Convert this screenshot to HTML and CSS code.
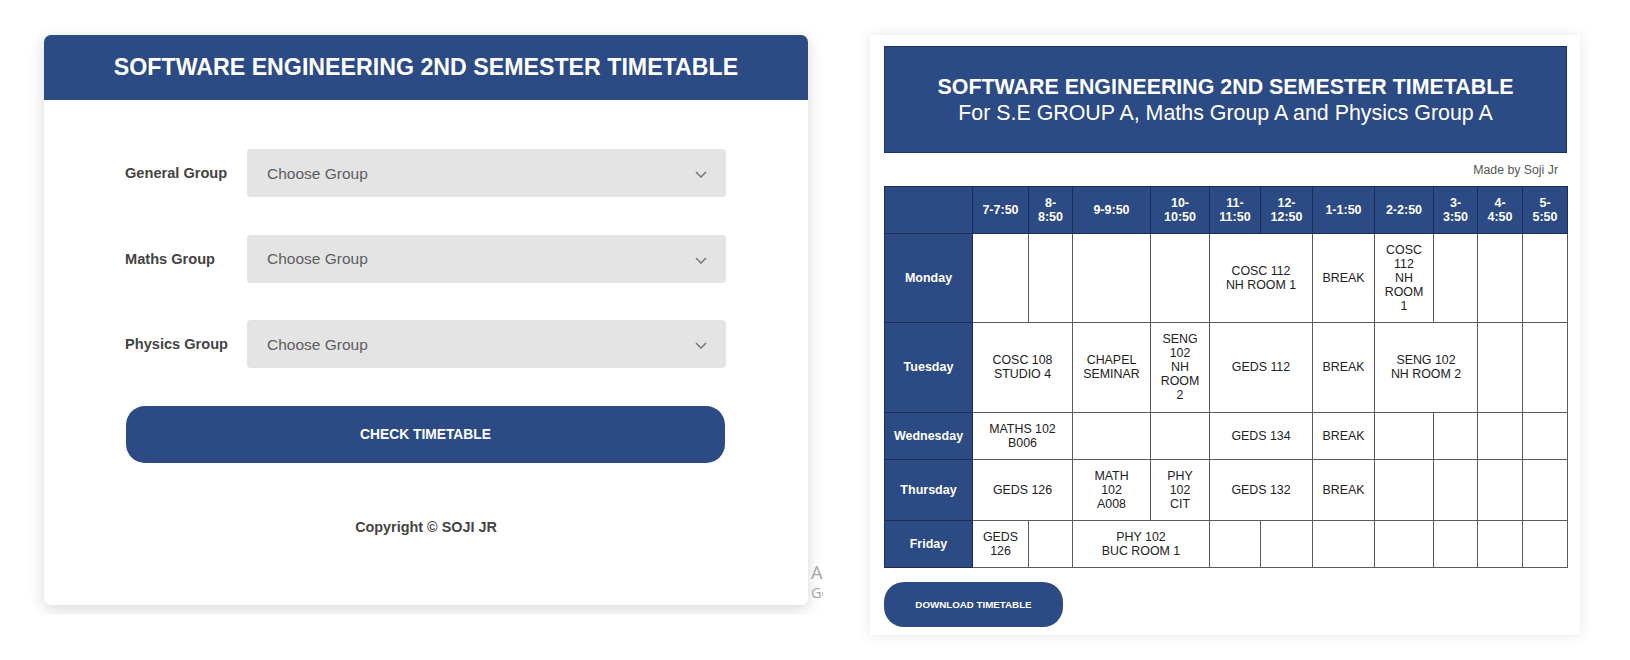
FILE: index.html
```html
<!DOCTYPE html>
<html lang="en">
<head>
<meta charset="utf-8">
<title>Software Engineering Timetable</title>
<link rel="stylesheet" href="styles.css">
</head>
<body>
<div class="page">
  <section class="shot-left">
    <div class="card">
      <header class="card-head"><h1>SOFTWARE ENGINEERING 2ND SEMESTER TIMETABLE</h1></header>
      <form class="card-body">
        <div class="field">
          <label>General Group</label>
          <div class="select-wrap">
            <select><option>Choose Group</option></select>
            <svg class="chev" width="12" height="7" viewBox="0 0 12 7"><path d="M1 1l5 5 5-5" fill="none" stroke="#7a7a7a" stroke-width="1.6"/></svg>
          </div>
        </div>
        <div class="field">
          <label>Maths Group</label>
          <div class="select-wrap">
            <select><option>Choose Group</option></select>
            <svg class="chev" width="12" height="7" viewBox="0 0 12 7"><path d="M1 1l5 5 5-5" fill="none" stroke="#7a7a7a" stroke-width="1.6"/></svg>
          </div>
        </div>
        <div class="field">
          <label>Physics Group</label>
          <div class="select-wrap">
            <select><option>Choose Group</option></select>
            <svg class="chev" width="12" height="7" viewBox="0 0 12 7"><path d="M1 1l5 5 5-5" fill="none" stroke="#7a7a7a" stroke-width="1.6"/></svg>
          </div>
        </div>
        <button class="check-btn" type="button">CHECK TIMETABLE</button>
        <p class="copy">Copyright © SOJI JR</p>
      </form>
    </div>
    <div class="watermark">
      <div class="wm1">Activate Windows</div>
      <div class="wm2">Go to Settings to activate Windows.</div>
    </div>
  </section>

  <section class="shot-right">
    <div class="panel">
      <div class="tt-head">
        <div class="tt-title">SOFTWARE ENGINEERING 2ND SEMESTER TIMETABLE</div>
        <div class="tt-sub">For S.E GROUP A, Maths Group A and Physics Group A</div>
      </div>
      <div class="made">Made by Soji Jr</div>
      <table class="tt">
        <colgroup>
          <col class="w88"><col class="w56"><col class="w44"><col class="w78"><col class="w59"><col class="w51"><col class="w52"><col class="w62"><col class="w59"><col class="w44"><col class="w45"><col class="w45">
        </colgroup>
        <thead>
          <tr>
            <th></th>
            <th>7-7:50</th>
            <th>8-<br>8:50</th>
            <th>9-9:50</th>
            <th>10-<br>10:50</th>
            <th>11-<br>11:50</th>
            <th>12-<br>12:50</th>
            <th>1-1:50</th>
            <th>2-2:50</th>
            <th>3-<br>3:50</th>
            <th>4-<br>4:50</th>
            <th>5-<br>5:50</th>
          </tr>
        </thead>
        <tbody>
          <tr>
            <th>Monday</th>
            <td></td><td></td><td></td><td></td>
            <td colspan="2">COSC 112<br>NH ROOM 1</td>
            <td>BREAK</td>
            <td>COSC<br>112<br>NH<br>ROOM<br>1</td>
            <td></td><td></td><td></td>
          </tr>
          <tr>
            <th>Tuesday</th>
            <td colspan="2">COSC 108<br>STUDIO 4</td>
            <td>CHAPEL<br>SEMINAR</td>
            <td>SENG<br>102<br>NH<br>ROOM<br>2</td>
            <td colspan="2">GEDS 112</td>
            <td>BREAK</td>
            <td colspan="2">SENG 102<br>NH ROOM 2</td>
            <td></td><td></td>
          </tr>
          <tr>
            <th>Wednesday</th>
            <td colspan="2">MATHS 102<br>B006</td>
            <td></td><td></td>
            <td colspan="2">GEDS 134</td>
            <td>BREAK</td>
            <td></td><td></td><td></td><td></td>
          </tr>
          <tr>
            <th>Thursday</th>
            <td colspan="2">GEDS 126</td>
            <td>MATH<br>102<br>A008</td>
            <td>PHY<br>102<br>CIT</td>
            <td colspan="2">GEDS 132</td>
            <td>BREAK</td>
            <td></td><td></td><td></td><td></td>
          </tr>
          <tr>
            <th>Friday</th>
            <td>GEDS<br>126</td>
            <td></td>
            <td colspan="2">PHY 102<br>BUC ROOM 1</td>
            <td></td><td></td><td></td><td></td><td></td><td></td><td></td>
          </tr>
        </tbody>
      </table>
      <button class="dl-btn" type="button">DOWNLOAD TIMETABLE</button>
    </div>
  </section>
</div>
</body>
</html>
```

FILE: styles.css
```css
* { box-sizing: border-box; }

html, body {
  margin: 0;
  padding: 0;
  background: #ffffff;
  font-family: "Liberation Sans", Arial, sans-serif;
}

.page {
  display: flex;
  align-items: flex-start;
  width: 1630px;
  height: 660px;
  overflow: hidden;
}

/* ---------- left side ---------- */
.shot-left {
  position: relative;
  flex: 0 0 823px;
  width: 823px;
  height: 615px;
  overflow: hidden;
  padding: 35px 0 0 44px;
}

.card {
  width: 764px;
  height: 570px;
  background: #ffffff;
  border-radius: 7px;
  box-shadow: 0 4px 16px rgba(0, 0, 0, 0.16);
  overflow: hidden;
}

.card-head {
  height: 65px;
  background: #2c4a83;
  display: flex;
  align-items: center;
  justify-content: center;
}

.card-head h1 {
  margin: 0;
  color: #ffffff;
  font-size: 23.2px;
  font-weight: 700;
  line-height: 1.15;
}

.card-body {
  margin: 0;
  padding: 49px 81px 0 81px;
}

.field {
  display: flex;
  align-items: center;
  height: 48px;
  margin-bottom: 37.5px;
}

.field label {
  flex: 0 0 122px;
  font-size: 14.6px;
  font-weight: 700;
  color: #444444;
}

.select-wrap {
  position: relative;
  flex: 0 0 479px;
  height: 48px;
}

.select-wrap select {
  -webkit-appearance: none;
  appearance: none;
  width: 100%;
  height: 48px;
  border: none;
  border-radius: 4px;
  background: #e4e4e4;
  padding: 0 0 0 20px;
  font-family: "Liberation Sans", Arial, sans-serif;
  font-size: 15.5px;
  color: #5e5e5e;
  outline: none;
}

.chev {
  position: absolute;
  right: 19px;
  top: 22px;
}

.check-btn {
  display: block;
  width: 599px;
  height: 57px;
  margin: 0 0 0 1px;
  border: none;
  border-radius: 19px;
  background: #2c4a83;
  color: #ffffff;
  font-family: "Liberation Sans", Arial, sans-serif;
  font-size: 13.8px;
  font-weight: 700;
}

.copy {
  margin: 56px 0 0 0;
  text-align: center;
  font-size: 14.4px;
  font-weight: 700;
  color: #444444;
}

.watermark {
  position: absolute;
  left: 811px;
  top: 561px;
  font-family: "Open Sans", "Noto Sans", sans-serif;
  color: #a6a6a6;
  white-space: nowrap;
}

.wm1 {
  font-size: 18px;
  line-height: 23px;
}

.wm2 {
  font-size: 14.5px;
  line-height: 18px;
}

/* ---------- right side ---------- */
.shot-right {
  flex: 0 0 auto;
  padding: 35px 0 0 47px;
}

.panel {
  width: 710px;
  height: 600px;
  background: #ffffff;
  box-shadow: 0 0 14px rgba(0, 0, 0, 0.1);
  padding: 11px 13px 0 14px;
}

.tt-head {
  height: 107px;
  background: #2c4a83;
  border: 1px solid #1d3463;
  display: flex;
  flex-direction: column;
  align-items: center;
  justify-content: center;
  color: #ffffff;
  font-size: 21.4px;
  line-height: 26px;
}

.tt-title { font-weight: 700; }
.tt-sub { font-weight: 400; }

.made {
  margin: 10px 0 0 0;
  padding-right: 9px;
  text-align: right;
  font-size: 12.3px;
  line-height: 14px;
  color: #555555;
}

.tt {
  margin-top: 9px;
  width: 683px;
  table-layout: fixed;
  border-collapse: collapse;
  font-size: 12.4px;
  color: #222222;
}

.w88 { width: 88px; }
.w56 { width: 56px; }
.w44 { width: 44px; }
.w78 { width: 78px; }
.w59 { width: 59px; }
.w51 { width: 51px; }
.w52 { width: 52px; }
.w62 { width: 62px; }
.w45 { width: 45px; }

.tt td {
  border: 1px solid #5a5a5a;
  padding: 9.1px 2px;
  text-align: center;
  vertical-align: middle;
  background: #ffffff;
}

.tt th {
  border: 1px solid #1b2d55;
  background: #2c4a83;
  color: #ffffff;
  font-size: 12.5px;
  font-weight: 700;
  padding: 9.1px 2px;
  text-align: center;
  vertical-align: middle;
}

.dl-btn {
  display: block;
  margin-top: 14px;
  width: 179px;
  height: 45px;
  border: none;
  border-radius: 20px;
  background: #2c4a83;
  color: #ffffff;
  font-family: "Liberation Sans", Arial, sans-serif;
  font-size: 9.75px;
  font-weight: 700;
  padding: 0;
}
```
